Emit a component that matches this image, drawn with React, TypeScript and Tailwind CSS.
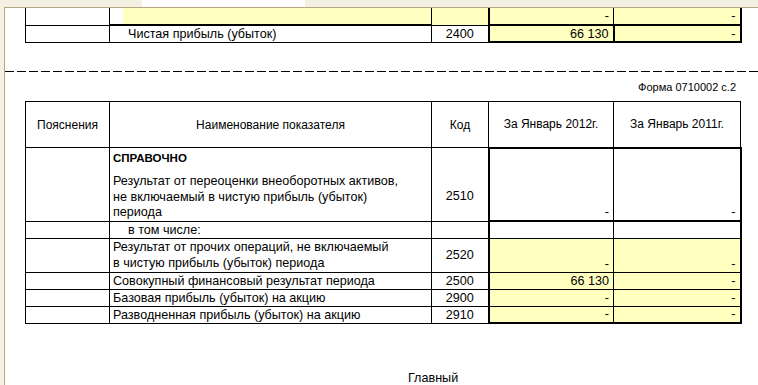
const Y = "bg-[#ffffc0]";

export default function App() {
  return (
    <div className="w-[758px] h-[385px] overflow-hidden bg-[#f4f0e2] flex flex-col font-['Liberation_Sans',Arial,sans-serif] text-black">
      {/* window frame top */}
      <div className="h-[7px] flex shrink-0">
        <div className="w-[142px] bg-[#f4f0e2]" />
        <div className="w-[163px] bg-white" />
        <div className="flex-1 bg-[#f4f0e2]" />
      </div>
      <div className="flex-1 ml-[4px] border-l border-t border-[#b5a785] bg-white">
        {/* end of previous page */}
        <table className="ml-[20px] border-collapse table-fixed w-[715px] text-[12.6px] leading-[14px]">
          <colgroup>
            <col className="w-[84px]" />
            <col className="w-[322px]" />
            <col className="w-[57px]" />
            <col className="w-[125px]" />
            <col className="w-[127px]" />
          </colgroup>
          <tbody>
            <tr>
              <td className="h-[16px] border-x border-black" />
              <td className="border-r border-black">
                <div className="flex h-[16px]">
                  <div className="w-[13px]" />
                  <div className={`flex-1 ${Y}`} />
                </div>
              </td>
              <td className={`border-r border-black ${Y}`} />
              <td className={`border-l-2 border-r border-black ${Y} text-right pr-[4px]`}>-</td>
              <td className={`border-r-2 border-black ${Y} text-right pr-[4px]`}>-</td>
            </tr>
            <tr>
              <td className="h-[17px] border border-black" />
              <td className="border-t-2 border-b border-r border-black pl-[18px] whitespace-nowrap">Чистая прибыль (убыток)</td>
              <td className="border-t border-b border-r border-black text-center">2400</td>
              <td className={`border-2 border-black ${Y} text-right pr-[4px]`}>66 130</td>
              <td className={`border-2 border-black ${Y} text-right pr-[4px]`}>-</td>
            </tr>
          </tbody>
        </table>

        <div className="mt-[28px] h-px bg-[repeating-linear-gradient(to_right,#000_0_9px,transparent_9px_12px)]" />

        <div className="ml-[20px] w-[711px] text-right text-[11px] leading-[14px] mt-[8px]">Форма 0710002 с.2</div>

        <table className="ml-[20px] mt-[7px] border-collapse table-fixed w-[715px] text-[12.6px] leading-[14px]">
          <colgroup>
            <col className="w-[84px]" />
            <col className="w-[322px]" />
            <col className="w-[57px]" />
            <col className="w-[125px]" />
            <col className="w-[127px]" />
          </colgroup>
          <tbody>
            <tr className="text-[12px]">
              <td className="h-[46px] border border-black text-center">Пояснения</td>
              <td className="border border-black text-center">Наименование показателя</td>
              <td className="border border-black text-center">Код</td>
              <td className="border border-black text-center">За Январь 2012г.</td>
              <td className="border border-black text-center">За Январь 2011г.</td>
            </tr>
            <tr>
              <td className="h-[72px] border border-black" />
              <td className="border border-black align-top pl-[3px] whitespace-nowrap">
                <div className="pt-[3px] font-bold text-[11.5px]">СПРАВОЧНО</div>
                <div className="mt-[9px] leading-[15.5px]">
                  Результат от переоценки внеоборотных активов,
                  <br />
                  не включаемый в чистую прибыль (убыток)
                  <br />
                  периода
                </div>
              </td>
              <td className="border border-black text-center align-bottom pb-[18px]">2510</td>
              <td className="border-2 border-r border-black text-right align-bottom pr-[4px] pb-[1px]">-</td>
              <td className="border-2 border-l border-black text-right align-bottom pr-[4px] pb-[1px]">-</td>
            </tr>
            <tr>
              <td className="h-[17px] border border-black" />
              <td className="border border-black pl-[18px]">в том числе:</td>
              <td className="border border-black" />
              <td className="border-l-2 border-r border-y border-black" />
              <td className="border-r-2 border-y border-black" />
            </tr>
            <tr>
              <td className="h-[34px] border border-black" />
              <td className="border border-black pl-[3px] whitespace-nowrap leading-[16px]">
                Результат от прочих операций, не включаемый
                <br />
                в чистую прибыль (убыток) периода
              </td>
              <td className="border border-black text-center">2520</td>
              <td className={`border-l-2 border-r border-y border-black ${Y} text-right align-bottom pr-[4px] pb-[1px]`}>-</td>
              <td className={`border-r-2 border-y border-black ${Y} text-right align-bottom pr-[4px] pb-[1px]`}>-</td>
            </tr>
            {[
              ["Совокупный финансовый результат периода", "2500", "66 130"],
              ["Базовая прибыль (убыток) на акцию", "2900", "-"],
              ["Разводненная прибыль (убыток) на акцию", "2910", "-"],
            ].map(([name, code, v], i) => (
              <tr key={code}>
                <td className="h-[17px] border border-black" />
                <td className="border border-black pl-[3px] whitespace-nowrap">{name}</td>
                <td className="border border-black text-center">{code}</td>
                <td className={`border-l-2 border-r border-t border-black ${i === 2 ? "border-b-2" : "border-b"} ${Y} text-right pr-[4px]`}>{v}</td>
                <td className={`border-r-2 border-t border-black ${i === 2 ? "border-b-2" : "border-b"} ${Y} text-right pr-[4px]`}>-</td>
              </tr>
            ))}
          </tbody>
        </table>

        <div className="mt-[47px] pl-[403px] text-[12.6px] leading-[14px]">Главный</div>
      </div>
    </div>
  );
}
